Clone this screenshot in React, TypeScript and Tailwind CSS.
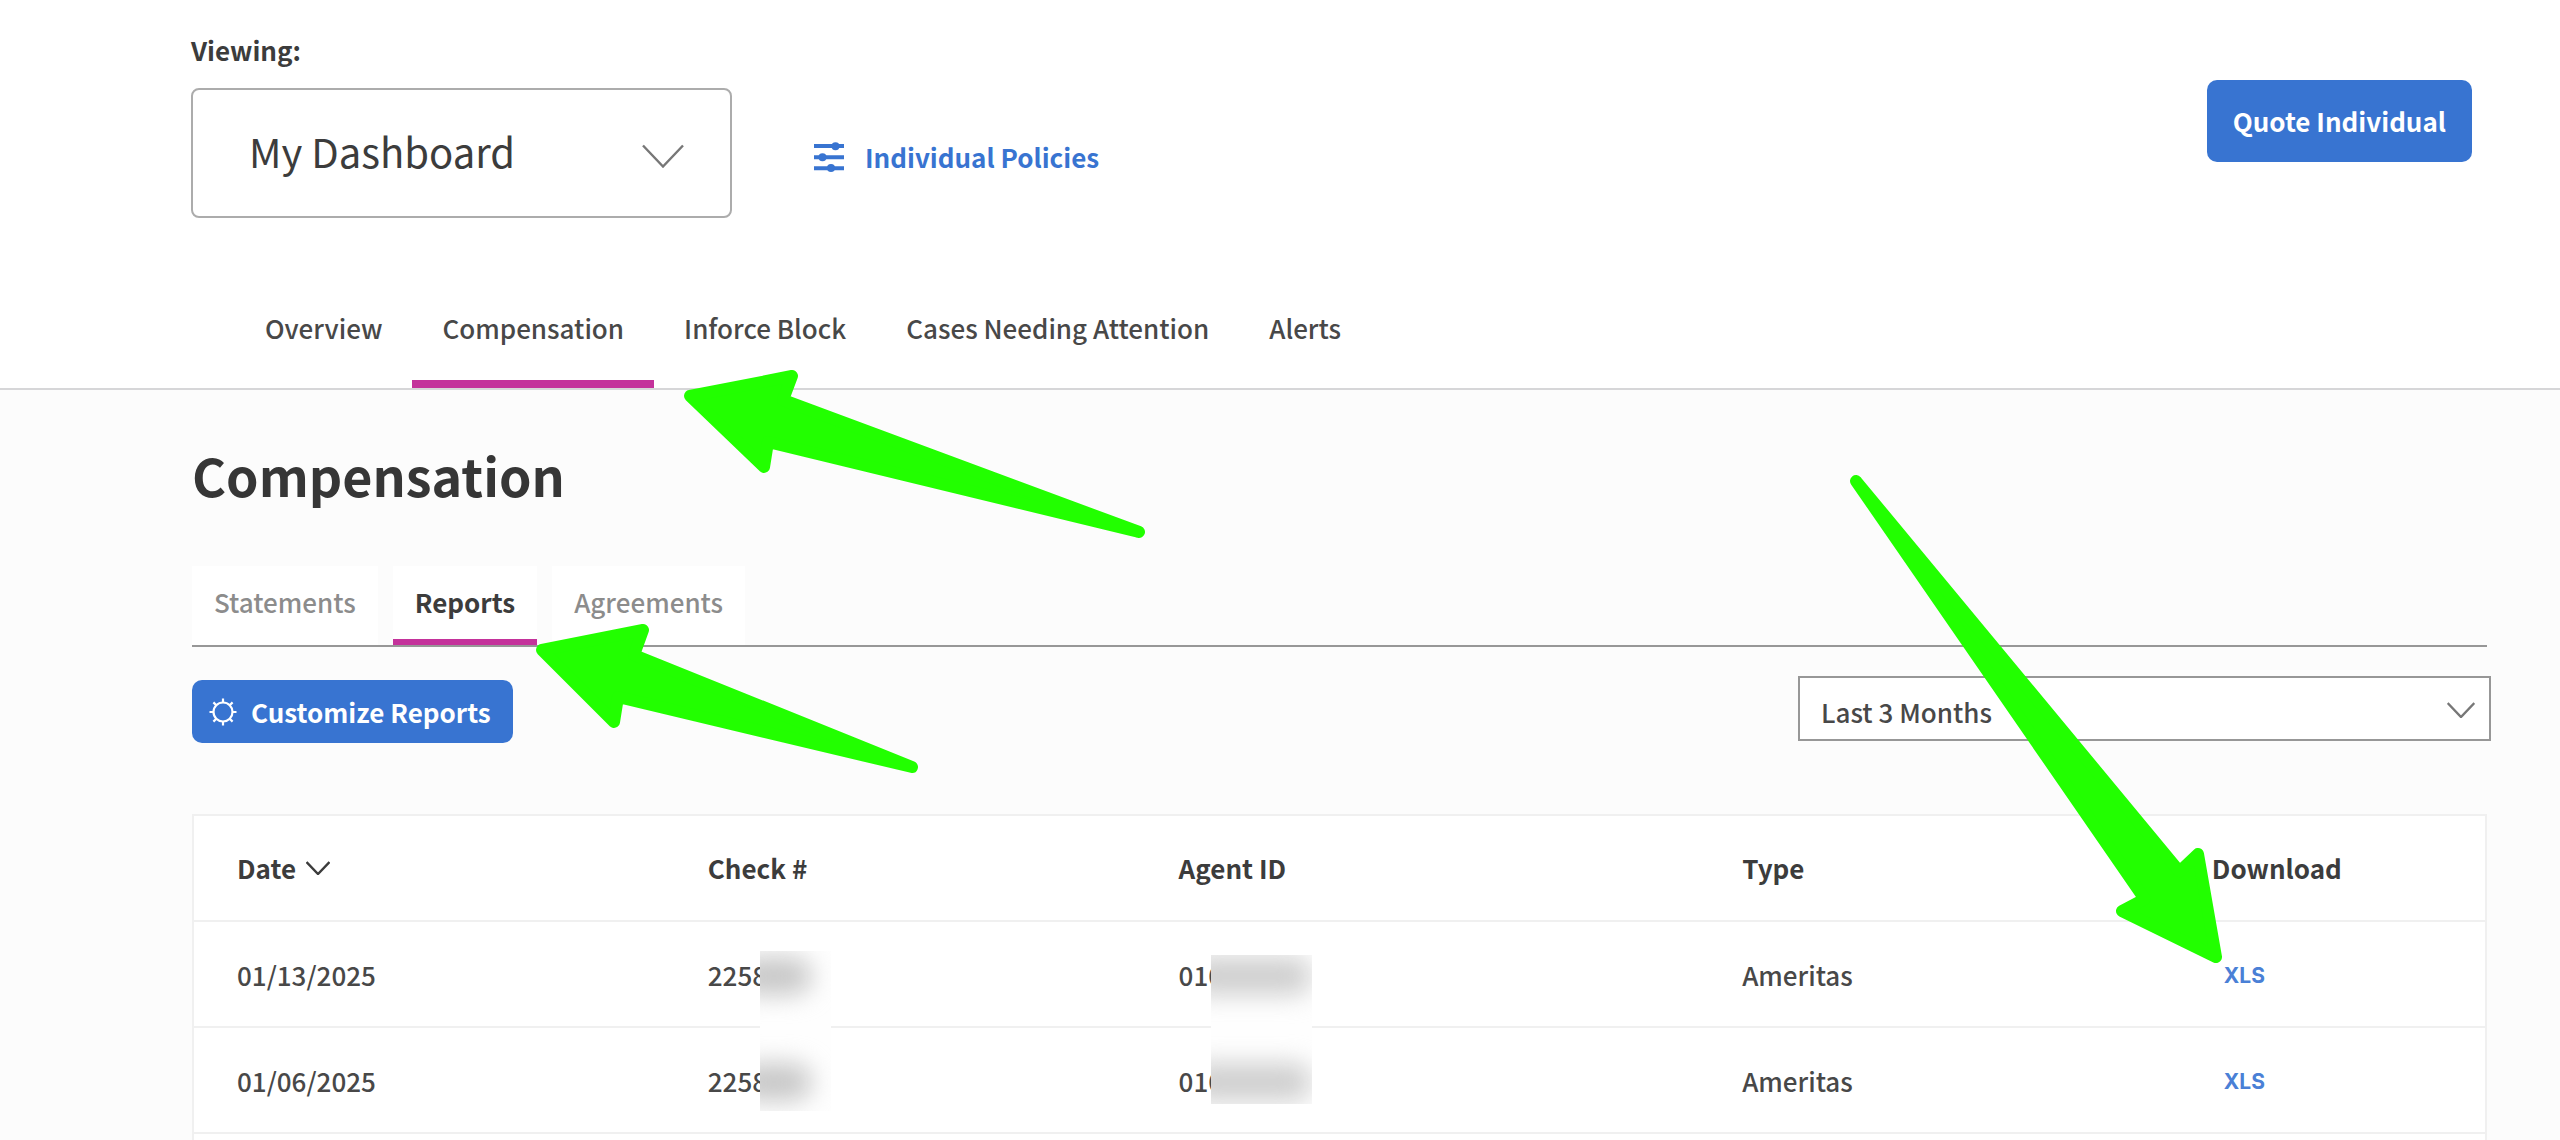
import type { ReactNode } from "react";

const navTabs = ["Overview", "Compensation", "Inforce Block", "Cases Needing Attention", "Alerts"];
const reportTabs = ["Statements", "Reports", "Agreements"];

const rows = [
  { date: "01/13/2025", check: "2258", agent: "010", type: "Ameritas" },
  { date: "01/06/2025", check: "2258", agent: "010", type: "Ameritas" },
];

function Chevron({ className }: { className: string }) {
  return (
    <svg viewBox="0 0 42 24" fill="none" stroke="currentColor" className={className} aria-hidden>
      <path d="M1 1.5 21 22.5 41 1.5" strokeWidth="2.4" vectorEffect="non-scaling-stroke" />
    </svg>
  );
}

function SlidersIcon() {
  return (
    <svg viewBox="0 0 30 30" fill="currentColor" className="size-[30px]" aria-hidden>
      <path d="M0 2h30v4H0zM0 13.3h30v4H0zM0 24.3h30v4H0z" />
      <circle cx="21.5" cy="4.2" r="4" />
      <circle cx="8.5" cy="15.3" r="4" />
      <circle cx="17" cy="26" r="4" />
    </svg>
  );
}

function GearIcon() {
  return (
    <svg viewBox="0 0 28 28" fill="none" stroke="currentColor" strokeWidth="2.2" className="size-7" aria-hidden>
      <circle cx="14" cy="14" r="9.5" />
      <path d="M14 4.5V.5M14 23.5v4M4.5 14h-4M23.5 14h4M7.3 7.3 4.4 4.4M20.7 7.3l2.9-2.9M7.3 20.7l-2.9 2.9M20.7 20.7l2.9 2.9" />
    </svg>
  );
}

function Redaction({ className, children }: { className: string; children: ReactNode }) {
  return (
    <span className={`absolute z-10 overflow-hidden bg-[#fefefe] ${className}`} aria-hidden>
      {children}
    </span>
  );
}

function Arrows() {
  return (
    <svg
      viewBox="0 0 2560 1140"
      className="pointer-events-none absolute left-0 top-0 z-20 w-full"
      fill="#22ff00"
      stroke="#22ff00"
      strokeWidth="12"
      strokeLinejoin="round"
      aria-hidden
    >
      <path d="M690 396 792 376 783 400 1139 532 768 442 764 467Z" />
      <path d="M542 650 643 630 634 655 912 767 618 697 614 722Z" />
      <path d="M2216 957 2198 854 2179.5 871.5 1856 481 2144.7 899 2122 911Z" />
    </svg>
  );
}

function Header() {
  return (
    <header className="border-b-2 border-[#d6d6d8] bg-white pt-8">
      <div className="flex items-start pl-[191px] pr-[88px]">
        <div className="flex w-[541px] flex-col gap-5">
          <label htmlFor="viewing" className="text-[26px] leading-9 font-bold">
            Viewing:
          </label>
          <div className="relative">
            <select
              id="viewing"
              className="h-[130px] w-full appearance-none rounded-lg border-2 border-[#acacac] bg-white pb-1 pl-[56px] text-[40px]"
            >
              <option>My Dashboard</option>
            </select>
            <Chevron className="pointer-events-none absolute right-12 top-14 h-6 w-[42px] text-[#777]" />
          </div>
        </div>
        <a href="#policies" className="mt-[107px] ml-[82px] flex items-center gap-[21px] text-[26px] leading-9 font-bold text-[#3874d1]">
          <SlidersIcon />
          Individual Policies
        </a>
        <button type="button" className="mt-12 ml-auto h-[82px] rounded-[10px] bg-[#3874d1] px-[26px] text-[26px] leading-9 font-bold text-white">
          Quote Individual
        </button>
      </div>
      <nav className="mt-[92px] flex pl-[235px]">
        {navTabs.map((tab) => (
          <a
            key={tab}
            href="#tab"
            className={`border-b-8 px-[30px] pb-[34px] text-[26px] leading-9 font-medium text-[#484848] ${
              tab === "Compensation" ? "border-[#c4329b]" : "border-transparent"
            }`}
          >
            {tab}
          </a>
        ))}
      </nav>
    </header>
  );
}

function ReportsTable() {
  return (
    <div className="mt-[71px] flex-1 border-x-2 border-[#f0f0f0] bg-white">
      <table className="w-full table-fixed border-collapse text-left text-[26px] leading-9">
        <colgroup>
          <col className="w-[20.55%]" />
          <col className="w-[20.55%]" />
          <col className="w-[24.6%]" />
          <col className="w-[20.5%]" />
          <col />
        </colgroup>
        <thead>
          <tr className="h-[106px] border-y-2 border-[#f0f0f0] [&>th]:pl-[43px]">
            <th>
              <button type="button" className="flex items-center gap-2.5">
                Date
                <Chevron className="h-[14px] w-6" />
              </button>
            </th>
            <th>Check #</th>
            <th>Agent ID</th>
            <th>Type</th>
            <th>Download</th>
          </tr>
        </thead>
        <tbody className="font-medium text-[#484848]">
          {rows.map((row, i) => (
            <tr key={row.date} className="h-[106px] border-b-2 border-[#f0f0f0] [&>td]:pt-0.5 [&>td]:pl-[43px]">
              <td>{row.date}</td>
              <td>
                <span className="relative block">
                  {row.check}
                  {i === 0 && (
                    <Redaction className="-top-1.5 left-[52px] h-40 w-[71px]">
                      <span className="absolute top-1.5 -left-6 h-[38px] w-[76px] rounded-full bg-[#c8c8c8] blur-md" />
                      <span className="absolute top-[112px] -left-6 h-[38px] w-[76px] rounded-full bg-[#c8c8c8] blur-md" />
                    </Redaction>
                  )}
                </span>
              </td>
              <td>
                <span className="relative block">
                  {row.agent}
                  {i === 0 && (
                    <Redaction className="-top-0.5 left-8 h-[149px] w-[101px]">
                      <span className="absolute top-0.5 -left-6 h-[38px] w-[124px] rounded-2xl bg-[#cfcfcf] blur-md" />
                      <span className="absolute top-[108px] -left-6 h-[38px] w-[124px] rounded-2xl bg-[#cfcfcf] blur-md" />
                    </Redaction>
                  )}
                </span>
              </td>
              <td>{row.type}</td>
              <td>
                <a href="#xls" className="block pt-0.5 pl-3 font-['Inter',sans-serif] text-[21px] font-bold text-[#4a80d6]">
                  XLS
                </a>
              </td>
            </tr>
          ))}
        </tbody>
      </table>
    </div>
  );
}

export default function App() {
  return (
    <div className="relative flex h-screen flex-col overflow-hidden bg-[#fcfcfc] font-['Noto_Sans_CJK_SC',sans-serif] text-[#3c3c3c]">
      <Header />
      <main className="flex flex-1 flex-col pt-[53px] pr-[73px] pl-48">
        <h1 className="text-[52px] leading-16 font-bold text-[#363636]">Compensation</h1>
        <div className="mt-[59px] flex gap-[15px] border-b-2 border-[#979797]">
          {reportTabs.map((tab) => (
            <button
              key={tab}
              type="button"
              className={`border-b-[6px] bg-white px-[22px] pt-[18px] pb-[19px] text-[26px] leading-9 ${
                tab === "Reports" ? "border-[#c4329b] font-bold" : "border-white font-medium text-[#8c8c8c]"
              }`}
            >
              {tab}
            </button>
          ))}
        </div>
        <div className="mt-[29px] flex items-start justify-between">
          <button
            type="button"
            className="mt-1 flex h-[63px] items-center gap-[14px] rounded-[10px] bg-[#3874d1] pr-[22px] pl-[17px] text-[26px] leading-9 font-bold text-white"
          >
            <GearIcon />
            Customize Reports
          </button>
          <div className="relative -mr-1 w-[693px]">
            <select
              aria-label="Period"
              className="block h-[65px] w-full appearance-none border-2 border-[#979797] bg-white pt-1.5 pl-[21px] text-[26px] font-medium text-[#484848]"
            >
              <option>Last 3 Months</option>
            </select>
            <Chevron className="pointer-events-none absolute top-[26px] right-4 h-4 w-7 text-[#777]" />
          </div>
        </div>
        <ReportsTable />
      </main>
      <Arrows />
    </div>
  );
}
